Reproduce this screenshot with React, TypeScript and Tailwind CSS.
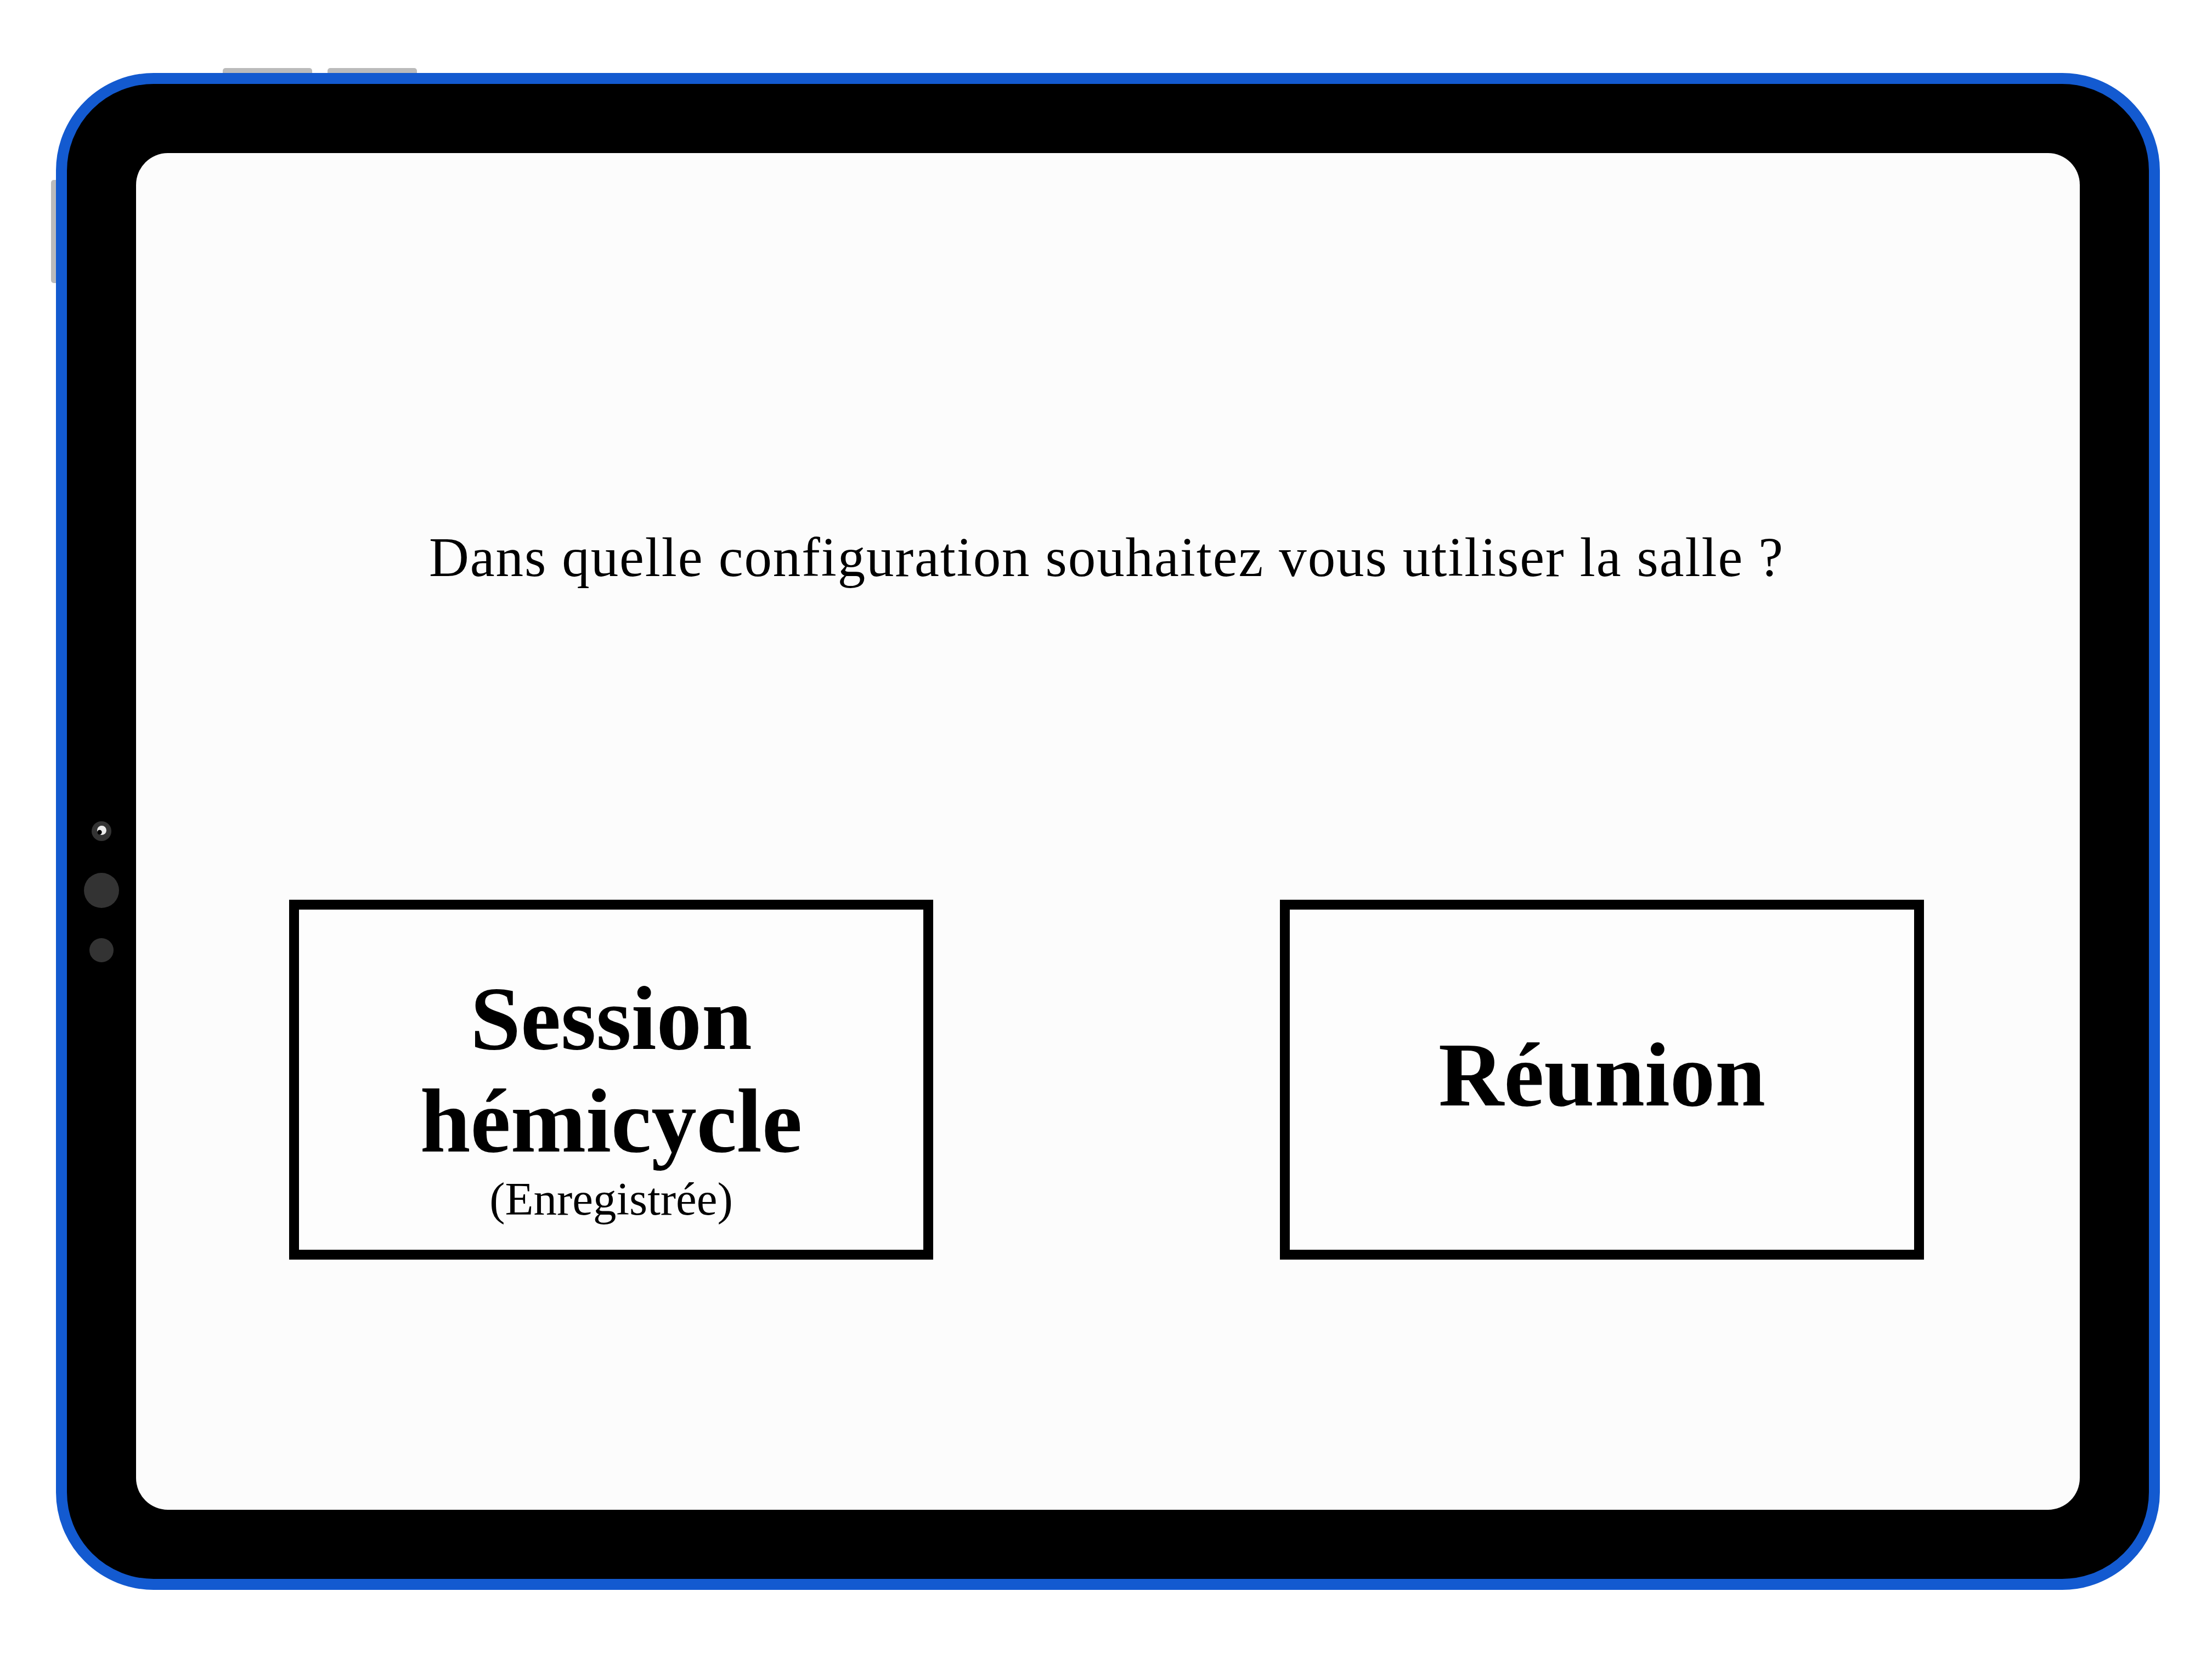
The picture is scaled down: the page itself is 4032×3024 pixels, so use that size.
import React from "react";

const serif = "font-['Liberation_Serif','Times_New_Roman',serif]";

const Camera = () => (
  <svg width="36" height="36" viewBox="0 0 36 36">
    <circle cx="18" cy="18" r="18" fill="#333333" />
    <circle cx="18.5" cy="16.5" r="8.5" fill="#ececec" />
    <circle cx="14.5" cy="20" r="4.2" fill="#000" />
  </svg>
);

const ChoiceBox = ({ children, className = "" }: { children: React.ReactNode; className?: string }) => {
  return (
    <button
      className={`w-[1174px] h-[656px] border-[18px] border-black bg-[#fdfdfd] flex flex-col items-center justify-center text-black ${className}`}
    >
      {children}
    </button>
  );
};

export default function App() {
  return (
    <div className={`w-[4032px] h-[3024px] bg-white flex items-center justify-center ${serif}`}>
      <div className="relative w-[3835px] h-[2765px] ml-[6px] mt-[7px] rounded-[178px] border-[20px] border-[#135ad0] bg-black flex">
        {/* hardware buttons */}
        <span className="absolute top-[-29px] left-[284px] w-[163px] h-[9px] rounded-t-[5px] bg-[#bbbbbb]" />
        <span className="absolute top-[-29px] left-[475px] w-[163px] h-[9px] rounded-t-[5px] bg-[#bbbbbb]" />
        <span className="absolute left-[-29px] top-[175px] w-[9px] h-[188px] rounded-l-[5px] bg-[#bbbbbb]" />

        {/* left bezel with sensors */}
        <div className="w-[126px] flex flex-col items-center pt-[1344px]">
          <Camera />
          <span className="mt-[58px] w-[64px] h-[64px] rounded-full bg-[#333333]" />
          <span className="mt-[55px] w-[44px] h-[44px] rounded-full bg-[#333333]" />
        </div>

        {/* screen */}
        <div className="flex-1 my-[126px] rounded-[58px] bg-[#fcfcfc] flex flex-col items-center pt-[679px] pr-[4px]">
          <h1 className="text-[101px] leading-[1.15] font-normal tracking-[1.9px] text-black">
            Dans quelle configuration souhaitez vous utiliser la salle ?
          </h1>

          <div className="mt-[566px] flex flex-row gap-[632px]">
            <ChoiceBox className="pt-[54px]">
              <span className="text-[165px] leading-[187px] font-bold text-center">
                Session
                <br />
                hémicycle
              </span>
              <span className="mt-[6px] text-[85px] leading-none font-normal">(Enregistrée)</span>
            </ChoiceBox>
            <ChoiceBox className="pb-[18px]">
              <span className="text-[165px] leading-[187px] font-bold">Réunion</span>
            </ChoiceBox>
          </div>
        </div>

        <div className="w-[126px]" />
      </div>
    </div>
  );
}
